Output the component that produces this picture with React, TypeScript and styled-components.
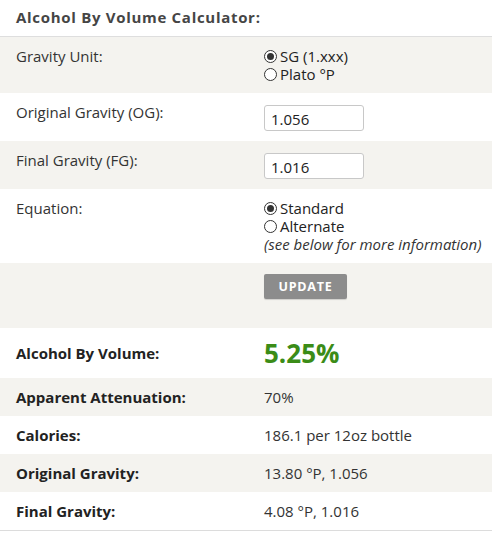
import React from "react";
import styled, { createGlobalStyle } from "styled-components";

const Global = createGlobalStyle`
  html, body { margin: 0; padding: 0; background: #ffffff; }
  body { font-family: "Open Sans", "Noto Sans", sans-serif; color: #333; }
`;

const Panel = styled.div`
  width: 492px;
  border-bottom: 1px solid #dcdcdc;
`;

const Header = styled.div`
  height: 37px;
  box-sizing: border-box;
  padding: 7px 16px 0;
  font-size: 15px;
  font-weight: 700;
  letter-spacing: 0.7px;
  line-height: 20px;
  color: #454545;
  border-bottom: 1px solid #dedede;
`;

const Row = styled.div<{ $shade: boolean; $pad?: string }>`
  display: grid;
  grid-template-columns: 248px 1fr;
  padding: ${(p) => p.$pad ?? "10px 16px"};
  background: ${(p) => (p.$shade ? "#f4f3ef" : "#ffffff")};
  align-items: start;
`;

const ResultRow = styled(Row)`
  align-items: center;
`;

const Label = styled.div<{ $bold?: boolean }>`
  font-size: 15px;
  line-height: 20px;
  margin-top: -1px;
  font-weight: ${(p) => (p.$bold ? 700 : 400)};
  color: ${(p) => (p.$bold ? "#222" : "#333")};
`;

const Value = styled.div`
  font-size: 15px;
  line-height: 20px;
  color: #333;
`;

const RadioGroup = styled.div`
  display: flex;
  flex-direction: column;
  font-size: 15px;
  line-height: 18px;
`;

const RadioLine = styled.label`
  display: flex;
  align-items: center;
  gap: 3px;
  color: #222;
`;

const Circle = styled.span<{ $on: boolean }>`
  width: 13px;
  height: 13px;
  box-sizing: border-box;
  border: 1px solid #333;
  border-radius: 50%;
  background: #fff;
  display: inline-flex;
  align-items: center;
  justify-content: center;
  &::after {
    content: "";
    width: 7px;
    height: 7px;
    border-radius: 50%;
    background: ${(p) => (p.$on ? "#333" : "transparent")};
  }
`;

const Note = styled.div`
  font-style: italic;
  font-size: 15px;
  line-height: 18px;
  color: #333;
  white-space: nowrap;
`;

const Input = styled.input`
  width: 100px;
  height: 26px;
  box-sizing: border-box;
  margin-top: 2px;
  border: 1px solid #c8c8c8;
  border-radius: 3px;
  padding: 2px 6px 0;
  font-family: "Open Sans", "Noto Sans", sans-serif;
  font-size: 15px;
  color: #222;
  background: #fff;
  outline: none;
`;

const Button = styled.button`
  width: 83px;
  height: 25px;
  margin-top: 1px;
  border: none;
  border-radius: 2px;
  background: #8c8c8c;
  box-shadow: 0 1px 1px rgba(0, 0, 0, 0.15);
  color: #fff;
  font-family: "Open Sans", "Noto Sans", sans-serif;
  font-weight: 700;
  font-size: 12.5px;
  letter-spacing: 0.8px;
  padding: 0;
`;

const Abv = styled.div`
  font-size: 26px;
  font-weight: 700;
  line-height: 32px;
  color: #3b8c17;
`;

const Radio = ({ on, children }: { on: boolean; children: React.ReactNode }) => (
  <RadioLine>
    <Circle $on={on} />
    <span>{children}</span>
  </RadioLine>
);

const results: [string, string][] = [
  ["Apparent Attenuation:", "70%"],
  ["Calories:", "186.1 per 12oz bottle"],
  ["Original Gravity:", "13.80 °P, 1.056"],
  ["Final Gravity:", "4.08 °P, 1.016"],
];

export default function App() {
  return (
    <>
      <Global />
      <Panel>
        <Header>Alcohol By Volume Calculator:</Header>
        <Row $shade>
          <Label>Gravity Unit:</Label>
          <RadioGroup>
            <Radio on>SG (1.xxx)</Radio>
            <Radio on={false}>Plato °P</Radio>
          </RadioGroup>
        </Row>
        <Row $shade={false}>
          <Label>Original Gravity (OG):</Label>
          <div>
            <Input defaultValue="1.056" />
          </div>
        </Row>
        <Row $shade>
          <Label>Final Gravity (FG):</Label>
          <div>
            <Input defaultValue="1.016" />
          </div>
        </Row>
        <Row $shade={false}>
          <Label>Equation:</Label>
          <RadioGroup>
            <Radio on>Standard</Radio>
            <Radio on={false}>Alternate</Radio>
            <Note>(see below for more information)</Note>
          </RadioGroup>
        </Row>
        <Row $shade $pad="10px 16px 29px">
          <div />
          <div>
            <Button>UPDATE</Button>
          </div>
        </Row>
        <ResultRow $shade={false} $pad="9px 16px">
          <Label $bold>Alcohol By Volume:</Label>
          <Abv>5.25%</Abv>
        </ResultRow>
        {results.map(([k, v], i) => (
          <ResultRow key={k} $shade={i % 2 === 0} $pad="9px 16px">
            <Label $bold>{k}</Label>
            <Value>{v}</Value>
          </ResultRow>
        ))}
      </Panel>
    </>
  );
}
